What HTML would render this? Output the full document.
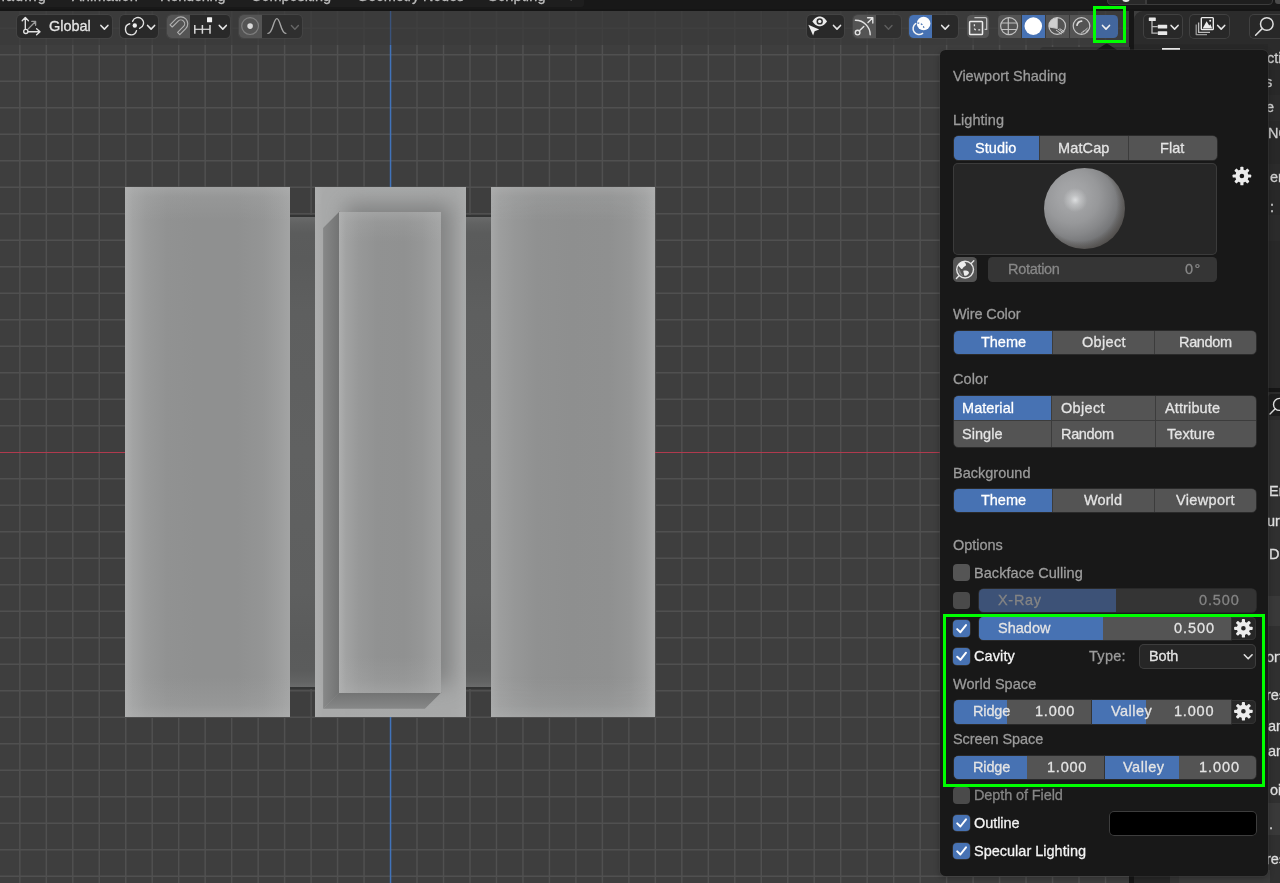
<!DOCTYPE html>
<html lang="en"><head><meta charset="utf-8"><title>Viewport Shading</title>
<style>
html,body{margin:0;padding:0}
body{width:1280px;height:883px;overflow:hidden;position:relative;background:#3e3e3e;
 font-family:"Liberation Sans",sans-serif;font-size:14.5px;-webkit-font-smoothing:antialiased}
.t{position:absolute;white-space:nowrap;line-height:1;will-change:transform;-webkit-text-stroke:.28px currentColor;}
.abs{position:absolute}
svg{position:absolute;left:0;top:0;overflow:visible}
</style></head><body>
<svg width="1280" height="883" viewBox="0 0 1280 883"><path d="M19.83 10V883M46.31 10V883M72.79 10V883M99.27 10V883M125.75 10V883M152.23 10V883M178.71 10V883M205.19 10V883M231.67 10V883M258.15 10V883M284.63 10V883M311.11 10V883M337.59 10V883M364.07 10V883M417.03 10V883M443.51 10V883M469.99 10V883M496.47 10V883M522.95 10V883M549.43 10V883M575.91 10V883M602.39 10V883M628.87 10V883M655.35 10V883M681.83 10V883M708.31 10V883M734.79 10V883M761.27 10V883M787.75 10V883M814.23 10V883M840.71 10V883M867.19 10V883M893.67 10V883M920.15 10V883M946.63 10V883M973.11 10V883M999.59 10V883M1026.07 10V883M1052.55 10V883M1079.03 10V883M1105.51 10V883M0 28.20H1129.6M0 54.70H1129.6M0 81.20H1129.6M0 107.70H1129.6M0 134.20H1129.6M0 160.70H1129.6M0 187.20H1129.6M0 213.70H1129.6M0 240.20H1129.6M0 266.70H1129.6M0 293.20H1129.6M0 319.70H1129.6M0 346.20H1129.6M0 372.70H1129.6M0 399.20H1129.6M0 425.70H1129.6M0 478.70H1129.6M0 505.20H1129.6M0 531.70H1129.6M0 558.20H1129.6M0 584.70H1129.6M0 611.20H1129.6M0 637.70H1129.6M0 664.20H1129.6M0 690.70H1129.6M0 717.20H1129.6M0 743.70H1129.6M0 770.20H1129.6M0 796.70H1129.6M0 823.20H1129.6M0 849.70H1129.6M0 876.20H1129.6" stroke="#505050" stroke-width="1.5" fill="none"/><path d="M0 452.5H1129.6" stroke="#b03a4e" stroke-width="1.15" fill="none"/><path d="M390.55 10V883" stroke="#4173ba" stroke-width="1.5" fill="none"/></svg>
<div style="position:absolute;left:289.20px;top:214.90px;width:26.00px;height:474.60px;background:#333434;border-radius:0px;"></div>
<div style="position:absolute;left:289.20px;top:217.40px;width:26.00px;height:469.50px;background:linear-gradient(to bottom,#6a6b6b 0%,#626363 1.2%,#5b5c5c 3.5%,#5a5b5b 9%,#5e5f5f 20%,#606161 50%,#5e5f5f 80%,#5a5b5b 91%,#5b5c5c 96.5%,#626363 98.8%,#6a6b6b 100%);border-radius:0px;"></div>
<div style="position:absolute;left:465.00px;top:214.90px;width:26.30px;height:474.60px;background:#333434;border-radius:0px;"></div>
<div style="position:absolute;left:465.00px;top:217.40px;width:26.30px;height:469.50px;background:linear-gradient(to bottom,#6a6b6b 0%,#626363 1.2%,#5b5c5c 3.5%,#5a5b5b 9%,#5e5f5f 20%,#606161 50%,#5e5f5f 80%,#5a5b5b 91%,#5b5c5c 96.5%,#626363 98.8%,#6a6b6b 100%);border-radius:0px;"></div>
<div style="position:absolute;left:125.30px;top:187.40px;width:164.40px;height:529.80px;background:#8e8f8f;border-radius:0px;background:linear-gradient(to bottom,rgba(178,179,179,.5) 0,rgba(178,179,179,.2) 10px,rgba(178,179,179,0) 34px,rgba(178,179,179,0) 490px,rgba(178,179,179,.2) 518px,rgba(178,179,179,.5) 100%),linear-gradient(to right,#adaeae 0,#a2a3a3 8px,#989999 22px,#919292 42px,#8f9090 70px,#8f9090 112px,#949595 138px,#9c9d9d 154px,#a3a4a4 100%);"></div>
<div style="position:absolute;left:490.80px;top:187.40px;width:164.10px;height:529.80px;background:#8e8f8f;border-radius:0px;background:linear-gradient(to bottom,rgba(178,179,179,.5) 0,rgba(178,179,179,.2) 10px,rgba(178,179,179,0) 34px,rgba(178,179,179,0) 490px,rgba(178,179,179,.2) 518px,rgba(178,179,179,.5) 100%),linear-gradient(to right,#a6a7a7 0,#9d9e9e 8px,#969797 24px,#909191 46px,#8e8f8f 80px,#8f9090 118px,#959696 140px,#9fa0a0 154px,#abacac 100%);"></div>
<div class="abs" style="left:314.7px;top:187.4px;width:151.10px;height:529.80px;overflow:hidden;background:linear-gradient(to right,#aeafaf 0,#a9aaaa 8px,#a8a9a9 140px,#acadad 100%)"><div class="abs" style="left:34.30px;top:28.80px;width:89.90px;height:464.60px;box-shadow:4px -4px 20px 8px rgba(120,121,121,.85)"></div><svg width="151" height="530" viewBox="314.7 187.4 151 530" style="left:0;top:0"><defs><linearGradient id="shg" gradientUnits="userSpaceOnUse" x1="322.8" y1="0" x2="339" y2="0"><stop offset="0" stop-color="#878888"/><stop offset="1" stop-color="#727373"/></linearGradient><linearGradient id="shv" gradientUnits="userSpaceOnUse" x1="0" y1="692.8" x2="0" y2="709.1"><stop offset="0" stop-color="#727373"/><stop offset="1" stop-color="#878888"/></linearGradient></defs><path d="M339.5 211.7L322.8 228.5V709.1L339.5 692.4Z" fill="url(#shg)"/><path d="M322.8 709.1H424.6L441.4 692.3H339.2Z" fill="url(#shv)"/></svg><div class="abs" style="left:24.30px;top:24.80px;width:101.90px;height:480.60px;background-color:#909191;background:linear-gradient(to bottom,rgba(178,179,179,.5) 0,rgba(178,179,179,.18) 10px,rgba(178,179,179,0) 30px,rgba(178,179,179,0) 445px,rgba(178,179,179,.18) 468px,rgba(178,179,179,.45) 100%),linear-gradient(to right,#aeafaf 0,#a1a2a2 7px,#979898 20px,#919292 38px,#909191 66px,#969797 84px,#a3a4a4 100%)"></div></div>
<div style="position:absolute;left:0.00px;top:10.50px;width:1129.60px;height:34.30px;background:rgba(58,58,58,.74);border-radius:0px;"></div>
<svg width="1280" height="60" viewBox="0 0 1280 60"><path d="M390.55 10.6V44.8" stroke="#3a527a" stroke-width="1.2" fill="none"/></svg>
<div style="position:absolute;left:0.00px;top:0.00px;width:1280.00px;height:10.60px;background:#181818;border-radius:0px;"></div>
<div style="position:absolute;left:0.00px;top:0.00px;width:584.00px;height:6.60px;background:#1e1e1e;border-radius:0 0 3px 0;"></div>
<div style="position:absolute;left:0.00px;top:8.60px;width:1280.00px;height:2.00px;background:#151515;border-radius:0px;"></div>
<div style="position:absolute;left:17.20px;top:14.90px;width:94.70px;height:23.10px;background:#292929;border-radius:4.5px;box-shadow:0 0 0 1px rgba(78,78,78,.45);"></div>
<div style="position:absolute;left:120.30px;top:14.90px;width:37.80px;height:23.10px;background:#292929;border-radius:4.5px;box-shadow:0 0 0 1px rgba(78,78,78,.45);"></div>
<div style="position:absolute;left:167.20px;top:14.90px;width:62.50px;height:23.10px;background:#292929;border-radius:4.5px;box-shadow:0 0 0 1px rgba(78,78,78,.45);"></div>
<div style="position:absolute;left:167.20px;top:14.90px;width:23.00px;height:23.10px;background:#545454;border-radius:4.5px 0 0 4.5px;"></div>
<div style="position:absolute;left:239.20px;top:14.90px;width:62.50px;height:23.10px;background:#2f2f2f;border-radius:4.5px;box-shadow:0 0 0 1px rgba(78,78,78,.45);"></div>
<div style="position:absolute;left:239.20px;top:14.90px;width:23.00px;height:23.10px;background:#545454;border-radius:4.5px 0 0 4.5px;"></div>
<div style="position:absolute;left:806.50px;top:14.90px;width:37.50px;height:23.10px;background:#292929;border-radius:4.5px;box-shadow:0 0 0 1px rgba(78,78,78,.45);"></div>
<div style="position:absolute;left:853.00px;top:14.90px;width:48.00px;height:23.10px;background:#303030;border-radius:4.5px;box-shadow:0 0 0 1px rgba(78,78,78,.45);"></div>
<div style="position:absolute;left:853.00px;top:14.90px;width:23.00px;height:23.10px;background:#545454;border-radius:4.5px 0 0 4.5px;"></div>
<div style="position:absolute;left:909.40px;top:14.90px;width:48.60px;height:23.10px;background:#292929;border-radius:4.5px;box-shadow:0 0 0 1px rgba(78,78,78,.45);"></div>
<div style="position:absolute;left:909.40px;top:14.90px;width:23.00px;height:23.10px;background:#4772b3;border-radius:4.5px 0 0 4.5px;"></div>
<div style="position:absolute;left:966.50px;top:14.90px;width:22.40px;height:23.10px;background:#545454;border-radius:4.5px;"></div>
<div style="position:absolute;left:997.60px;top:14.90px;width:23.40px;height:23.10px;background:#545454;border-radius:4.5px 0 0 4.5px;"></div>
<div style="position:absolute;left:1021.80px;top:14.90px;width:23.20px;height:23.10px;background:#4772b3;border-radius:0px;"></div>
<div style="position:absolute;left:1045.80px;top:14.90px;width:23.40px;height:23.10px;background:#545454;border-radius:0px;"></div>
<div style="position:absolute;left:1070.00px;top:14.90px;width:23.40px;height:23.10px;background:#545454;border-radius:0px;"></div>
<div style="position:absolute;left:1094.00px;top:14.90px;width:24.20px;height:23.10px;background:#42669d;border-radius:0 4.5px 4.5px 0;"></div>
<span class="t" style="left:49.00px;top:18.96px;font-size:14.5px;color:#e4e4e4;letter-spacing:-0.043px;">Global</span>
<svg width="1280" height="50" viewBox="0 0 1280 50"><g stroke="#e2e2e2" stroke-width="1.35" fill="none" stroke-linecap="round" stroke-linejoin="round"><path d="M25.3 29.2V17.6M22.2 20.8L25.3 17.4L28.4 20.8"/><path d="M28.2 31.7H39.8M36.6 28.8L40 31.7L36.6 34.7"/><circle cx="25.8" cy="31.4" r="2.1"/><g opacity=".62"><path d="M28 29.1L35.5 21.5M31.8 21.4H35.6V25.3"/></g></g><path d="M100.90 25.45L104.40 29.15L107.90 25.45" stroke="#e6e6e6" stroke-width="1.6" fill="none" stroke-linecap="round" stroke-linejoin="round"/><g stroke="#e2e2e2" stroke-width="1.4" fill="none" stroke-linecap="round"><path d="M132.6 21.3A5.6 5.6 0 1 1 139.6 28.4"/><path d="M136.5 30.6A5.6 5.6 0 1 1 129.7 23.8"/></g><circle cx="134.8" cy="25.5" r="2.2" fill="#f0f0f0"/><path d="M147.60 25.45L151.10 29.15L154.60 25.45" stroke="#e6e6e6" stroke-width="1.6" fill="none" stroke-linecap="round" stroke-linejoin="round"/><g transform="translate(180.85 23.75) rotate(45)"><path d="M-6.9 8.4V0A6.9 6.9 0 0 1 6.9 0V8.4H3.8V0A3.8 3.8 0 0 0 -3.8 0V8.4Z" stroke="#b0b0b0" stroke-width="1.15" fill="none" stroke-linejoin="round"/></g><g stroke="#d8d8d8" stroke-width="1.5" fill="none"><path d="M194.8 24.9V33.7M202.4 24.9V33.7M210 24.9V33.7"/><path d="M194.8 29.3H210" stroke-width="1.2"/></g><rect x="207" y="17.2" width="5.1" height="5.1" rx=".6" fill="#f2f2f2"/><path d="M219.30 25.45L222.80 29.15L226.30 25.45" stroke="#e6e6e6" stroke-width="1.6" fill="none" stroke-linecap="round" stroke-linejoin="round"/><circle cx="250.1" cy="26.1" r="8.4" stroke="#7e7e7e" stroke-width="1.2" fill="none"/><circle cx="250.1" cy="26.1" r="2.8" fill="#dadada"/><path d="M268 33.4C273 33.4 273.4 18.6 276.9 18.6C280.4 18.6 280.8 33.4 285.8 33.4" stroke="#a6a6a6" stroke-width="1.4" fill="none" stroke-linecap="round"/><path d="M291.40 25.45L294.90 29.15L298.40 25.45" stroke="#666666" stroke-width="1.4" fill="none" stroke-linecap="round" stroke-linejoin="round"/><path d="M812.4 21.4C815 17.6 817.6 16.6 819.7 16.6C821.8 16.6 824.4 17.6 827 21.4C824.4 25.2 821.8 26.2 819.7 26.2C817.6 26.2 815 25.2 812.4 21.4Z" fill="#ececec"/><circle cx="819.7" cy="21.4" r="3.2" fill="#303030"/><circle cx="819.7" cy="21.4" r="1.7" fill="#ececec"/><path d="M808.3 24.7L819.2 29.6L814.6 31.2L813.1 35.4Z" fill="#ececec"/><path d="M833.50 25.45L837.00 29.15L840.50 25.45" stroke="#e6e6e6" stroke-width="1.6" fill="none" stroke-linecap="round" stroke-linejoin="round"/><g stroke="#e2e2e2" stroke-width="1.4" fill="none" stroke-linecap="round" stroke-linejoin="round"><path d="M855.4 20.2A14.6 14.6 0 0 1 870.2 34.8"/><circle cx="857.6" cy="32.6" r="2.3"/><path d="M859.4 30.8L863.8 26.4"/><path d="M868 22.5L872.8 17.7M867.6 17.7H872.8V23"/></g><path d="M885.00 25.45L888.50 29.15L892.00 25.45" stroke="#5e5e5e" stroke-width="1.4" fill="none" stroke-linecap="round" stroke-linejoin="round"/><path d="M922.6 33.4A5.9 5.9 0 1 1 915.6 23.6" stroke="#f4f4f4" stroke-width="1.5" fill="none" stroke-linecap="round"/><circle cx="923.6" cy="23.5" r="6.8" fill="#fdfdfd"/><path d="M917.5 23.1A5.9 5.9 0 0 1 924 28.4" stroke="#4772b3" stroke-width="1.2" fill="none" stroke-dasharray="1.8 1.6"/><path d="M941.70 25.45L945.20 29.15L948.70 25.45" stroke="#e6e6e6" stroke-width="1.6" fill="none" stroke-linecap="round" stroke-linejoin="round"/><g fill="none" stroke-linejoin="round"><path d="M974.4 17.6H985.3A1.4 1.4 0 0 1 986.7 19V29.4H984.6" stroke="#c4c4c4" stroke-width="1.3"/><rect x="969.6" y="21.6" width="12.9" height="12.9" rx=".8" stroke="#ededed" stroke-width="1.5"/><path d="M974.4 24.3V26.2M974.4 28.5C974.6 29.4 975.1 29.8 975.9 29.9M978.3 29.9H980.2" stroke="#e4e4e4" stroke-width="1.3"/></g><g stroke="#c2c2c2" stroke-width="1.2" fill="none"><circle cx="1009.1" cy="26.1" r="8.5"/><path d="M1008.3 17.7V34.5M1001.2 23H1017M1001.2 29.5H1017"/></g><circle cx="1033.3" cy="26.1" r="8.8" fill="#ffffff"/><g><circle cx="1057.2" cy="26" r="8.3" stroke="#c8c8c8" stroke-width="1.2" fill="none"/><path d="M1057.2 17.7A8.3 8.3 0 0 0 1048.9 26.8L1057.2 28.4Z" fill="#cfcfcf"/><path d="M1049 27L1057.2 28.4V17.8" stroke="#c8c8c8" stroke-width="1" fill="none"/><path d="M1057.6 28.8L1063.4 32.8M1059.6 28.6L1064.4 31.6M1056 30L1061.6 34" stroke="#c8c8c8" stroke-width="1" fill="none"/></g><g stroke="#c8c8c8" fill="none"><circle cx="1081.5" cy="26" r="8.3" stroke-width="1.2"/><path d="M1077 25.2A5.2 5.2 0 0 1 1081.6 21.2" stroke-width="1.7" stroke-linecap="round" stroke="#dcdcdc"/><path d="M1083 32.2L1087.6 28M1081 33.4L1084.2 30.6M1085.6 32L1088.6 29.4" stroke-width="1"/></g><path d="M1102.50 25.45L1106.00 29.15L1109.50 25.45" stroke="#f0f0f0" stroke-width="1.6" fill="none" stroke-linecap="round" stroke-linejoin="round"/></svg>
<div style="position:absolute;left:1129.40px;top:10.50px;width:4.60px;height:872.50px;background:#161616;border-radius:0px;"></div>
<div style="position:absolute;left:1134.00px;top:10.60px;width:156.00px;height:377.00px;background:#2b2b2b;border-radius:9px 0 0 0;"></div>
<div style="position:absolute;left:1134.00px;top:43.50px;width:156.00px;height:344.10px;background:#282828;border-radius:0px;"></div>
<div style="position:absolute;left:1134.00px;top:387.60px;width:156.00px;height:4.20px;background:#161616;border-radius:0px;"></div>
<div style="position:absolute;left:1134.00px;top:391.80px;width:156.00px;height:491.20px;background:#2b2b2b;border-radius:0px;"></div>
<div style="position:absolute;left:1134.00px;top:420.00px;width:36.00px;height:463.00px;background:#282828;border-radius:0px;"></div>
<div style="position:absolute;left:1170.00px;top:420.00px;width:120.00px;height:463.00px;background:#303030;border-radius:0px;"></div>
<div style="position:absolute;left:1142.50px;top:13.80px;width:40.10px;height:25.00px;background:#282828;border-radius:5px;box-shadow:inset 0 0 0 1px #414141;"></div>
<div style="position:absolute;left:1189.20px;top:13.80px;width:40.60px;height:25.00px;background:#282828;border-radius:5px;box-shadow:inset 0 0 0 1px #414141;"></div>
<div style="position:absolute;left:1249.20px;top:13.80px;width:50.80px;height:25.00px;background:#282828;border-radius:5px;box-shadow:inset 0 0 0 1px #414141;"></div>
<svg width="1280" height="883" viewBox="0 0 1280 883"><g fill="#e8e8e8"><rect x="1148.8" y="17.4" width="7" height="3.7" rx=".6"/><rect x="1157.8" y="24.8" width="9.4" height="3.8" rx=".6"/><rect x="1157.8" y="31.2" width="9.4" height="3.8" rx=".6"/></g><path d="M1152 21V33.2H1157.8M1152 26.7H1157.8" stroke="#b8b8b8" stroke-width="1.3" fill="none"/><path d="M1171.10 25.45L1174.60 29.15L1178.10 25.45" stroke="#e6e6e6" stroke-width="1.6" fill="none" stroke-linecap="round" stroke-linejoin="round"/><g fill="none" stroke-linejoin="round"><path d="M1196.2 24.6V34.6H1207" stroke="#9a9a9a" stroke-width="1.3"/><path d="M1198.6 22.4V32.4H1210" stroke="#bdbdbd" stroke-width="1.3"/><rect x="1201.3" y="17.6" width="12" height="12" rx=".8" stroke="#ececec" stroke-width="1.4"/><path d="M1202.6 28.6L1206.6 21.2L1209.2 25.4L1210.4 24.2L1212.2 28.6Z" fill="#ececec"/><circle cx="1210.2" cy="20.8" r="1" fill="#ececec"/></g><path d="M1217.70 25.45L1221.20 29.15L1224.70 25.45" stroke="#e6e6e6" stroke-width="1.6" fill="none" stroke-linecap="round" stroke-linejoin="round"/><g stroke="#dedede" stroke-width="1.5" fill="none" stroke-linecap="round"><circle cx="1266.8" cy="24" r="6.3"/><path d="M1262.2 28.6L1255.6 35.2"/></g><g stroke="#dedede" stroke-width="1.4" fill="none" stroke-linecap="round"><circle cx="1279.5" cy="404.4" r="6"/><path d="M1275.2 408.8L1270 414"/></g></svg>
<div style="position:absolute;left:1162.00px;top:48.00px;width:18.20px;height:2.80px;background:#f0f0f0;border-radius:0px;"></div>
<div style="position:absolute;left:1268.00px;top:394.20px;width:32.00px;height:22.20px;background:#1d1d1d;border-radius:4px;"></div>
<svg width="1280" height="883" viewBox="0 0 1280 883"><g stroke="#dedede" stroke-width="1.4" fill="none" stroke-linecap="round"><circle cx="1279.5" cy="404.4" r="6"/><path d="M1275.2 408.8L1270 414"/></g></svg>
<div style="position:absolute;left:1107.30px;top:-20.00px;width:38.90px;height:24.50px;background:#292929;border-radius:0 0 0 4.5px;box-shadow:inset 0 0 0 1px #3c3c3c;"></div>
<div style="position:absolute;left:1146.20px;top:-20.00px;width:126.80px;height:24.50px;background:#1e1e1e;border-radius:0 0 4.5px 0;box-shadow:inset 0 0 0 1px #3c3c3c;"></div>
<div style="position:absolute;left:1274.50px;top:-20.00px;width:25.50px;height:23.60px;background:#4a4a4a;border-radius:3px;"></div>
<div style="position:absolute;left:1122.20px;top:-6.00px;width:7.60px;height:7.90px;background:#e6e6e6;border-radius:50%;"></div>
<span class="t" style="left:-14.10px;top:-11.34px;font-size:14.5px;color:#bcbcbc;letter-spacing:1.081px;">Shading</span>
<span class="t" style="left:72.00px;top:-11.34px;font-size:14.5px;color:#bcbcbc;letter-spacing:0.165px;">Animation</span>
<span class="t" style="left:159.90px;top:-11.34px;font-size:14.5px;color:#bcbcbc;letter-spacing:-0.176px;">Rendering</span>
<span class="t" style="left:251.40px;top:-11.34px;font-size:14.5px;color:#bcbcbc;letter-spacing:-0.060px;">Compositing</span>
<span class="t" style="left:356.90px;top:-11.34px;font-size:14.5px;color:#bcbcbc;letter-spacing:-0.200px;">Geometry Nodes</span>
<span class="t" style="left:488.40px;top:-11.34px;font-size:14.5px;color:#bcbcbc;letter-spacing:0.135px;">Scripting</span>
<span class="t" style="left:567.20px;top:-11.34px;font-size:14.5px;color:#bcbcbc;">+</span>
<div style="position:absolute;left:1268.00px;top:43.50px;width:32.00px;height:26.50px;background:#2b2b2b;border-radius:0px;"></div>
<div style="position:absolute;left:1268.00px;top:95.00px;width:32.00px;height:25.50px;background:#2b2b2b;border-radius:0px;"></div>
<div style="position:absolute;left:1268.00px;top:164.00px;width:32.00px;height:26.00px;background:#2b2b2b;border-radius:0px;"></div>
<div style="position:absolute;left:1268.00px;top:215.00px;width:32.00px;height:26.00px;background:#2b2b2b;border-radius:0px;"></div>
<span class="t" style="left:1267.40px;top:50.76px;font-size:14.5px;color:#d0d0d0;">ction</span>
<span class="t" style="left:1265.00px;top:74.96px;font-size:14.5px;color:#d0d0d0;">s</span>
<span class="t" style="left:1265.60px;top:100.36px;font-size:14.5px;color:#d0d0d0;">e</span>
<span class="t" style="left:1267.90px;top:126.36px;font-size:14.5px;color:#d0d0d0;">NOR</span>
<span class="t" style="left:1269.70px;top:169.76px;font-size:14.5px;color:#d0d0d0;">era</span>
<span class="t" style="left:1269.90px;top:199.76px;font-size:14.5px;color:#d0d0d0;">:</span>
<div style="position:absolute;left:1268.00px;top:420.00px;width:32.00px;height:463.00px;background:#303030;border-radius:0px;"></div>
<div style="position:absolute;left:1268.00px;top:596.00px;width:32.00px;height:30.00px;background:#393939;border-radius:0px;"></div>
<div style="position:absolute;left:1268.00px;top:803.00px;width:32.00px;height:32.00px;background:#393939;border-radius:0px;"></div>
<div style="position:absolute;left:1170.00px;top:870.00px;width:9.00px;height:13.00px;background:#363636;border-radius:0px;"></div>
<div style="position:absolute;left:1179.00px;top:870.00px;width:91.00px;height:13.00px;background:#3c3c3c;border-radius:0px;"></div>
<span class="t" style="left:1268.80px;top:483.56px;font-size:14.5px;color:#e0e0e0;">Eng</span>
<span class="t" style="left:1266.60px;top:513.96px;font-size:14.5px;color:#e0e0e0;">ur</span>
<span class="t" style="left:1268.80px;top:546.76px;font-size:14.5px;color:#e0e0e0;">De</span>
<span class="t" style="left:1266.40px;top:649.56px;font-size:14.5px;color:#e0e0e0;">ort</span>
<span class="t" style="left:1266.00px;top:687.76px;font-size:14.5px;color:#e0e0e0;">res</span>
<span class="t" style="left:1267.60px;top:718.96px;font-size:14.5px;color:#e0e0e0;">an</span>
<span class="t" style="left:1267.60px;top:743.96px;font-size:14.5px;color:#e0e0e0;">an</span>
<span class="t" style="left:1269.60px;top:782.96px;font-size:14.5px;color:#e0e0e0;">oise</span>
<span class="t" style="left:1269.40px;top:816.56px;font-size:14.5px;color:#e0e0e0;">.</span>
<span class="t" style="left:1266.00px;top:851.76px;font-size:14.5px;color:#e0e0e0;">res</span>
<div style="position:absolute;left:1040.20px;top:46.90px;width:89.40px;height:5.10px;background:#333333;border-radius:4px 0 0 0;"></div>
<svg width="1280" height="883" viewBox="0 0 1280 883"><path d="M1093.5 52L1104.6 44.4Q1106.6 43 1108.6 44.4L1120 52Z" fill="#181818"/></svg>
<div style="position:absolute;left:940.00px;top:50.20px;width:328.40px;height:825.50px;background:#181818;border-radius:5.5px;box-shadow:0 0 0 .8px rgba(75,75,75,.35),0 2px 6px rgba(0,0,0,.3);"></div>
<span class="t" style="left:953.20px;top:68.86px;font-size:14.5px;color:#9b9b9b;letter-spacing:-0.013px;">Viewport Shading</span>
<span class="t" style="left:953.20px;top:113.36px;font-size:14.5px;color:#9b9b9b;letter-spacing:0.029px;">Lighting</span>
<div style="position:absolute;left:953.60px;top:136.30px;width:263.70px;height:23.70px;background:#3c3c3c;border-radius:4.5px;box-shadow:0 0 0 .8px rgba(70,70,70,.55);"></div>
<div style="position:absolute;left:953.60px;top:136.30px;width:85.50px;height:23.70px;background:#4772b3;border-radius:4.5px 0 0 4.5px;"></div>
<div style="position:absolute;left:1040.10px;top:136.30px;width:87.60px;height:23.70px;background:#545454;border-radius:0;"></div>
<div style="position:absolute;left:1128.70px;top:136.30px;width:88.60px;height:23.70px;background:#545454;border-radius:0 4.5px 4.5px 0;"></div>
<span class="t" style="left:975.40px;top:140.71px;font-size:14.5px;color:#ffffff;letter-spacing:0.037px;">Studio</span>
<span class="t" style="left:1058.40px;top:140.71px;font-size:14.5px;color:#e4e4e4;letter-spacing:0.125px;">MatCap</span>
<span class="t" style="left:1160.40px;top:140.71px;font-size:14.5px;color:#e4e4e4;letter-spacing:0.076px;">Flat</span>
<div style="position:absolute;left:952.60px;top:163.00px;width:264.80px;height:91.50px;background:#262626;border-radius:5px;box-shadow:inset 0 0 0 1px #3b3b3b;"></div>
<div class="abs" style="left:1044.2px;top:168.3px;width:81px;height:81px;border-radius:50%;background:radial-gradient(circle 12px at 38.5% 39.5%,rgba(226,228,229,.9) 0,rgba(215,217,218,.5) 40%,rgba(200,202,203,0) 100%),radial-gradient(circle at 44% 44%,rgba(80,76,72,0) 58%,rgba(80,76,72,.55) 68%,rgba(72,68,64,.8) 76%),radial-gradient(circle 56px at 35% 35%,#a8a9ab 0,#a1a2a4 26%,#97989a 48%,#87888a 68%,#747577 86%,#666769 100%)"></div>
<div style="position:absolute;left:952.60px;top:257.30px;width:24.70px;height:24.70px;background:#545454;border-radius:4.5px;"></div>
<div style="position:absolute;left:987.80px;top:257.30px;width:229.50px;height:24.70px;background:#353535;border-radius:4.5px;"></div>
<span class="t" style="left:1007.90px;top:262.26px;font-size:14.5px;color:#888888;letter-spacing:-0.301px;">Rotation</span>
<span class="t" style="left:1184.80px;top:262.26px;font-size:14.5px;color:#888888;letter-spacing:1.337px;">0°</span>
<span class="t" style="left:953.20px;top:307.36px;font-size:14.5px;color:#9b9b9b;letter-spacing:-0.109px;">Wire Color</span>
<div style="position:absolute;left:953.60px;top:330.60px;width:302.70px;height:23.60px;background:#3c3c3c;border-radius:4.5px;box-shadow:0 0 0 .8px rgba(70,70,70,.55);"></div>
<div style="position:absolute;left:953.60px;top:330.60px;width:98.50px;height:23.60px;background:#4772b3;border-radius:4.5px 0 0 4.5px;"></div>
<div style="position:absolute;left:1053.10px;top:330.60px;width:100.90px;height:23.60px;background:#545454;border-radius:0;"></div>
<div style="position:absolute;left:1155.00px;top:330.60px;width:101.30px;height:23.60px;background:#545454;border-radius:0 4.5px 4.5px 0;"></div>
<span class="t" style="left:980.70px;top:334.96px;font-size:14.5px;color:#ffffff;letter-spacing:-0.033px;">Theme</span>
<span class="t" style="left:1082.40px;top:334.96px;font-size:14.5px;color:#e4e4e4;letter-spacing:0.319px;">Object</span>
<span class="t" style="left:1178.80px;top:334.96px;font-size:14.5px;color:#e4e4e4;letter-spacing:-0.342px;">Random</span>
<span class="t" style="left:953.20px;top:372.36px;font-size:14.5px;color:#9b9b9b;letter-spacing:0.087px;">Color</span>
<div style="position:absolute;left:953.60px;top:395.60px;width:302.70px;height:51.60px;background:#3c3c3c;border-radius:4.5px;box-shadow:0 0 0 .8px rgba(70,70,70,.55);"></div>
<div style="position:absolute;left:953.60px;top:395.60px;width:97.40px;height:24.70px;background:#4772b3;border-radius:4.5px 0 0 0;"></div>
<span class="t" style="left:962.20px;top:400.61px;font-size:14.5px;color:#ffffff;letter-spacing:0.061px;">Material</span>
<div style="position:absolute;left:1052.00px;top:395.60px;width:103.20px;height:24.70px;background:#545454;border-radius:0 0 0 0;"></div>
<span class="t" style="left:1060.70px;top:400.61px;font-size:14.5px;color:#e4e4e4;letter-spacing:0.319px;">Object</span>
<div style="position:absolute;left:1156.20px;top:395.60px;width:100.10px;height:24.70px;background:#545454;border-radius:0 4.5px 0 0;"></div>
<span class="t" style="left:1165.00px;top:400.61px;font-size:14.5px;color:#e4e4e4;letter-spacing:0.125px;">Attribute</span>
<div style="position:absolute;left:953.60px;top:421.20px;width:97.40px;height:26.00px;background:#545454;border-radius:0 0 0 4.5px;"></div>
<span class="t" style="left:962.20px;top:426.86px;font-size:14.5px;color:#e4e4e4;letter-spacing:0.038px;">Single</span>
<div style="position:absolute;left:1052.00px;top:421.20px;width:103.20px;height:26.00px;background:#545454;border-radius:0 0 0 0;"></div>
<span class="t" style="left:1060.90px;top:426.86px;font-size:14.5px;color:#e4e4e4;letter-spacing:-0.342px;">Random</span>
<div style="position:absolute;left:1156.20px;top:421.20px;width:100.10px;height:26.00px;background:#545454;border-radius:0 0 4.5px 0;"></div>
<span class="t" style="left:1166.90px;top:426.86px;font-size:14.5px;color:#e4e4e4;letter-spacing:0.058px;">Texture</span>
<span class="t" style="left:953.20px;top:465.56px;font-size:14.5px;color:#9b9b9b;letter-spacing:0.012px;">Background</span>
<div style="position:absolute;left:953.60px;top:488.50px;width:302.70px;height:23.80px;background:#3c3c3c;border-radius:4.5px;box-shadow:0 0 0 .8px rgba(70,70,70,.55);"></div>
<div style="position:absolute;left:953.60px;top:488.50px;width:98.50px;height:23.80px;background:#4772b3;border-radius:4.5px 0 0 4.5px;"></div>
<div style="position:absolute;left:1053.10px;top:488.50px;width:100.90px;height:23.80px;background:#545454;border-radius:0;"></div>
<div style="position:absolute;left:1155.00px;top:488.50px;width:101.30px;height:23.80px;background:#545454;border-radius:0 4.5px 4.5px 0;"></div>
<span class="t" style="left:980.70px;top:492.96px;font-size:14.5px;color:#ffffff;letter-spacing:-0.033px;">Theme</span>
<span class="t" style="left:1084.40px;top:492.96px;font-size:14.5px;color:#e4e4e4;letter-spacing:0.099px;">World</span>
<span class="t" style="left:1176.30px;top:492.96px;font-size:14.5px;color:#e4e4e4;letter-spacing:0.335px;">Viewport</span>
<span class="t" style="left:953.20px;top:537.96px;font-size:14.5px;color:#9b9b9b;letter-spacing:-0.045px;">Options</span>
<div style="position:absolute;left:952.85px;top:564.20px;width:17.20px;height:17.20px;background:#555555;border-radius:4px;"></div>
<span class="t" style="left:974.40px;top:566.16px;font-size:14.5px;color:#9e9e9e;letter-spacing:0.053px;">Backface Culling</span>
<div style="position:absolute;left:952.85px;top:592.00px;width:17.20px;height:17.20px;background:#4a4a4a;border-radius:4px;"></div>
<div style="position:absolute;left:978.80px;top:588.80px;width:277.20px;height:23.50px;background:#343434;border-radius:4.5px;overflow:hidden;box-shadow:0 0 0 .8px rgba(70,70,70,.5);"><div style="position:absolute;left:0;top:0;bottom:0;width:137.20px;background:#3d5277"></div></div>
<span class="t" style="left:997.90px;top:593.16px;font-size:14.5px;color:#848484;letter-spacing:0.703px;">X-Ray</span>
<span class="t" style="left:1199.20px;top:593.16px;font-size:14.5px;color:#848484;letter-spacing:0.853px;">0.500</span>
<div style="position:absolute;left:953.15px;top:620.40px;width:16.60px;height:16.60px;background:#4772b3;border-radius:4px;box-shadow:0 0 0 .7px rgba(84,84,84,.5);"></div>
<div style="position:absolute;left:978.80px;top:617.00px;width:251.80px;height:23.40px;background:#545454;border-radius:4.5px 0 0 4.5px;overflow:hidden;box-shadow:0 0 0 .8px rgba(70,70,70,.5);"><div style="position:absolute;left:0;top:0;bottom:0;width:124.60px;background:#4772b3"></div></div>
<div style="position:absolute;left:1231.20px;top:617.00px;width:25.10px;height:23.40px;background:#272727;border-radius:0 4.5px 4.5px 0;box-shadow:inset 0 0 0 1px #333;"></div>
<span class="t" style="left:997.90px;top:621.26px;font-size:14.5px;color:#e4e4e4;letter-spacing:0.020px;">Shadow</span>
<span class="t" style="left:1173.80px;top:621.26px;font-size:14.5px;color:#e4e4e4;letter-spacing:0.953px;">0.500</span>
<div style="position:absolute;left:953.15px;top:648.00px;width:16.60px;height:16.60px;background:#4772b3;border-radius:4px;box-shadow:0 0 0 .7px rgba(84,84,84,.5);"></div>
<span class="t" style="left:974.40px;top:649.16px;font-size:14.5px;color:#f4f4f4;letter-spacing:0.103px;">Cavity</span>
<span class="t" style="left:1089.40px;top:649.16px;font-size:14.5px;color:#9b9b9b;letter-spacing:0.284px;">Type:</span>
<div style="position:absolute;left:1139.40px;top:643.80px;width:116.90px;height:25.00px;background:#262626;border-radius:5px;box-shadow:inset 0 0 0 1px #3d3d3d;"></div>
<span class="t" style="left:1149.00px;top:648.76px;font-size:14.5px;color:#e4e4e4;letter-spacing:-0.143px;">Both</span>
<span class="t" style="left:953.20px;top:676.76px;font-size:14.5px;color:#9b9b9b;letter-spacing:0.045px;">World Space</span>
<div style="position:absolute;left:953.60px;top:700.00px;width:137.60px;height:23.50px;background:#545454;border-radius:4.5px 0 0 4.5px;overflow:hidden;box-shadow:0 0 0 .8px rgba(70,70,70,.5);"><div style="position:absolute;left:0;top:0;bottom:0;width:53.30px;background:#4772b3"></div></div>
<div style="position:absolute;left:1092.00px;top:700.00px;width:138.60px;height:23.50px;background:#545454;border-radius:0;overflow:hidden;box-shadow:0 0 0 .8px rgba(70,70,70,.5);"><div style="position:absolute;left:0;top:0;bottom:0;width:53.60px;background:#4772b3"></div></div>
<div style="position:absolute;left:1231.20px;top:700.00px;width:25.10px;height:23.50px;background:#272727;border-radius:0 4.5px 4.5px 0;box-shadow:inset 0 0 0 1px #333;"></div>
<span class="t" style="left:972.50px;top:704.36px;font-size:14.5px;color:#e4e4e4;letter-spacing:-0.147px;">Ridge</span>
<span class="t" style="left:1034.80px;top:704.36px;font-size:14.5px;color:#e4e4e4;letter-spacing:0.778px;">1.000</span>
<span class="t" style="left:1110.70px;top:704.36px;font-size:14.5px;color:#e4e4e4;letter-spacing:0.456px;">Valley</span>
<span class="t" style="left:1174.00px;top:704.36px;font-size:14.5px;color:#e4e4e4;letter-spacing:0.803px;">1.000</span>
<span class="t" style="left:953.20px;top:731.96px;font-size:14.5px;color:#9b9b9b;letter-spacing:-0.072px;">Screen Space</span>
<div style="position:absolute;left:953.60px;top:755.60px;width:150.10px;height:23.40px;background:#545454;border-radius:4.5px 0 0 4.5px;overflow:hidden;box-shadow:0 0 0 .8px rgba(70,70,70,.5);"><div style="position:absolute;left:0;top:0;bottom:0;width:73.70px;background:#4772b3"></div></div>
<div style="position:absolute;left:1104.50px;top:755.60px;width:151.80px;height:23.40px;background:#545454;border-radius:0 4.5px 4.5px 0;overflow:hidden;box-shadow:0 0 0 .8px rgba(70,70,70,.5);"><div style="position:absolute;left:0;top:0;bottom:0;width:74.30px;background:#4772b3"></div></div>
<span class="t" style="left:972.50px;top:759.86px;font-size:14.5px;color:#e4e4e4;letter-spacing:-0.147px;">Ridge</span>
<span class="t" style="left:1047.30px;top:759.86px;font-size:14.5px;color:#e4e4e4;letter-spacing:0.778px;">1.000</span>
<span class="t" style="left:1123.20px;top:759.86px;font-size:14.5px;color:#e4e4e4;letter-spacing:0.516px;">Valley</span>
<span class="t" style="left:1199.20px;top:759.86px;font-size:14.5px;color:#e4e4e4;letter-spacing:0.928px;">1.000</span>
<div style="position:absolute;left:952.85px;top:786.60px;width:17.20px;height:17.20px;background:#4a4a4a;border-radius:4px;"></div>
<span class="t" style="left:974.40px;top:788.36px;font-size:14.5px;color:#868686;letter-spacing:-0.113px;">Depth of Field</span>
<div style="position:absolute;left:953.15px;top:814.70px;width:16.60px;height:16.60px;background:#4772b3;border-radius:4px;box-shadow:0 0 0 .7px rgba(84,84,84,.5);"></div>
<span class="t" style="left:974.40px;top:815.96px;font-size:14.5px;color:#f4f4f4;letter-spacing:-0.057px;">Outline</span>
<div style="position:absolute;left:1109.40px;top:810.60px;width:147.50px;height:25.00px;background:#000000;border-radius:5px;box-shadow:inset 0 0 0 1px #3d3d3d;"></div>
<div style="position:absolute;left:953.15px;top:842.70px;width:16.60px;height:16.60px;background:#4772b3;border-radius:4px;box-shadow:0 0 0 .7px rgba(84,84,84,.5);"></div>
<span class="t" style="left:974.40px;top:844.16px;font-size:14.5px;color:#f4f4f4;">Specular Lighting</span>
<svg width="1280" height="883" viewBox="0 0 1280 883"><g transform="translate(1241.9 176)" fill="#ececec"><rect x="-1.60" y="-9.30" width="3.2" height="4.30" rx=".9" transform="rotate(0)"/><rect x="-1.60" y="-9.30" width="3.2" height="4.30" rx=".9" transform="rotate(45)"/><rect x="-1.60" y="-9.30" width="3.2" height="4.30" rx=".9" transform="rotate(90)"/><rect x="-1.60" y="-9.30" width="3.2" height="4.30" rx=".9" transform="rotate(135)"/><rect x="-1.60" y="-9.30" width="3.2" height="4.30" rx=".9" transform="rotate(180)"/><rect x="-1.60" y="-9.30" width="3.2" height="4.30" rx=".9" transform="rotate(225)"/><rect x="-1.60" y="-9.30" width="3.2" height="4.30" rx=".9" transform="rotate(270)"/><rect x="-1.60" y="-9.30" width="3.2" height="4.30" rx=".9" transform="rotate(315)"/><path fill-rule="evenodd" d="M-6.6 0A6.6 6.6 0 1 0 6.6 0A6.6 6.6 0 1 0 -6.6 0ZM-2.3 0A2.3 2.3 0 1 1 2.3 0A2.3 2.3 0 1 1 -2.3 0Z"/></g><g transform="translate(1243.4 628.3)" fill="#ececec"><rect x="-1.60" y="-9.30" width="3.2" height="4.30" rx=".9" transform="rotate(0)"/><rect x="-1.60" y="-9.30" width="3.2" height="4.30" rx=".9" transform="rotate(45)"/><rect x="-1.60" y="-9.30" width="3.2" height="4.30" rx=".9" transform="rotate(90)"/><rect x="-1.60" y="-9.30" width="3.2" height="4.30" rx=".9" transform="rotate(135)"/><rect x="-1.60" y="-9.30" width="3.2" height="4.30" rx=".9" transform="rotate(180)"/><rect x="-1.60" y="-9.30" width="3.2" height="4.30" rx=".9" transform="rotate(225)"/><rect x="-1.60" y="-9.30" width="3.2" height="4.30" rx=".9" transform="rotate(270)"/><rect x="-1.60" y="-9.30" width="3.2" height="4.30" rx=".9" transform="rotate(315)"/><path fill-rule="evenodd" d="M-6.6 0A6.6 6.6 0 1 0 6.6 0A6.6 6.6 0 1 0 -6.6 0ZM-2.3 0A2.3 2.3 0 1 1 2.3 0A2.3 2.3 0 1 1 -2.3 0Z"/></g><g transform="translate(1243.4 711.3)" fill="#ececec"><rect x="-1.60" y="-9.30" width="3.2" height="4.30" rx=".9" transform="rotate(0)"/><rect x="-1.60" y="-9.30" width="3.2" height="4.30" rx=".9" transform="rotate(45)"/><rect x="-1.60" y="-9.30" width="3.2" height="4.30" rx=".9" transform="rotate(90)"/><rect x="-1.60" y="-9.30" width="3.2" height="4.30" rx=".9" transform="rotate(135)"/><rect x="-1.60" y="-9.30" width="3.2" height="4.30" rx=".9" transform="rotate(180)"/><rect x="-1.60" y="-9.30" width="3.2" height="4.30" rx=".9" transform="rotate(225)"/><rect x="-1.60" y="-9.30" width="3.2" height="4.30" rx=".9" transform="rotate(270)"/><rect x="-1.60" y="-9.30" width="3.2" height="4.30" rx=".9" transform="rotate(315)"/><path fill-rule="evenodd" d="M-6.6 0A6.6 6.6 0 1 0 6.6 0A6.6 6.6 0 1 0 -6.6 0ZM-2.3 0A2.3 2.3 0 1 1 2.3 0A2.3 2.3 0 1 1 -2.3 0Z"/></g><path d="M1244.30 654.80L1248.20 658.80L1252.10 654.80" stroke="#e0e0e0" stroke-width="1.6" fill="none" stroke-linecap="round" stroke-linejoin="round"/><g transform="translate(965.1 269.6)"><circle r="8.4" stroke="#e4e4e4" stroke-width="1.4" fill="none"/><path d="M6.1 -6.1L8.7 -8.8M-6.1 6.1L-8.7 8.8" stroke="#e4e4e4" stroke-width="1.4" stroke-linecap="round"/><path d="M-6.7 -4C-6.2 -5.6 -5.4 -6.5 -4.6 -7C-3.6 -7.7 -2.4 -8 -1.3 -7.9C-0.4 -7.4 0.3 -6.8 0.5 -6.1C0.9 -5.4 1 -4.6 0.8 -4C0.2 -3.3 -0.6 -2.9 -1.3 -2.6C-1.9 -2.2 -2.2 -1.7 -2.5 -1.2C-2.9 -0.8 -3.3 -0.6 -3.7 -0.7C-4.3 -1 -4.8 -1.5 -5.1 -2.1C-5.8 -2.6 -6.4 -3.2 -6.7 -4Z" fill="#ececec"/><path d="M-1.8 1.2C-0.9 0.8 0.1 0.7 1 0.9C2.2 1.1 3.2 1.7 3.8 2.6C3.9 3.3 3.7 3.9 3.3 4.4C2.7 5.2 1.9 5.8 1 6.1C0.3 6.2 -0.4 6.1 -0.9 5.8C-1.1 5 -1.2 4.3 -1.35 3.5C-1.6 2.7 -1.8 2 -1.8 1.2Z" fill="#ececec"/><path d="M-6.6 -1.4C-5.8 -0.6 -5.2 0.2 -4.8 1.4C-4.4 2.6 -4 3.6 -3.2 4.6C-2.8 5.4 -2.4 6 -2 6.6C-3.4 6.2 -4.8 5 -5.8 3.4C-6.6 2 -6.8 0.2 -6.6 -1.4Z" fill="#8c8c8c"/></g><path d="M957.20 629.10L960.40 632.20L966.00 625.10" stroke="#ffffff" stroke-width="2" fill="none" stroke-linecap="round" stroke-linejoin="round"/><path d="M957.20 656.70L960.40 659.80L966.00 652.70" stroke="#ffffff" stroke-width="2" fill="none" stroke-linecap="round" stroke-linejoin="round"/><path d="M957.20 823.40L960.40 826.50L966.00 819.40" stroke="#ffffff" stroke-width="2" fill="none" stroke-linecap="round" stroke-linejoin="round"/><path d="M957.20 851.40L960.40 854.50L966.00 847.40" stroke="#ffffff" stroke-width="2" fill="none" stroke-linecap="round" stroke-linejoin="round"/></svg>
<div class="abs" style="left:1092.7px;top:6.2px;width:27.80px;height:30.40px;border:3.1px solid #00ff00"></div>
<div class="abs" style="left:943.1px;top:614.1px;width:316.00px;height:166.70px;border:3.1px solid #00ff00"></div>
</body></html>
